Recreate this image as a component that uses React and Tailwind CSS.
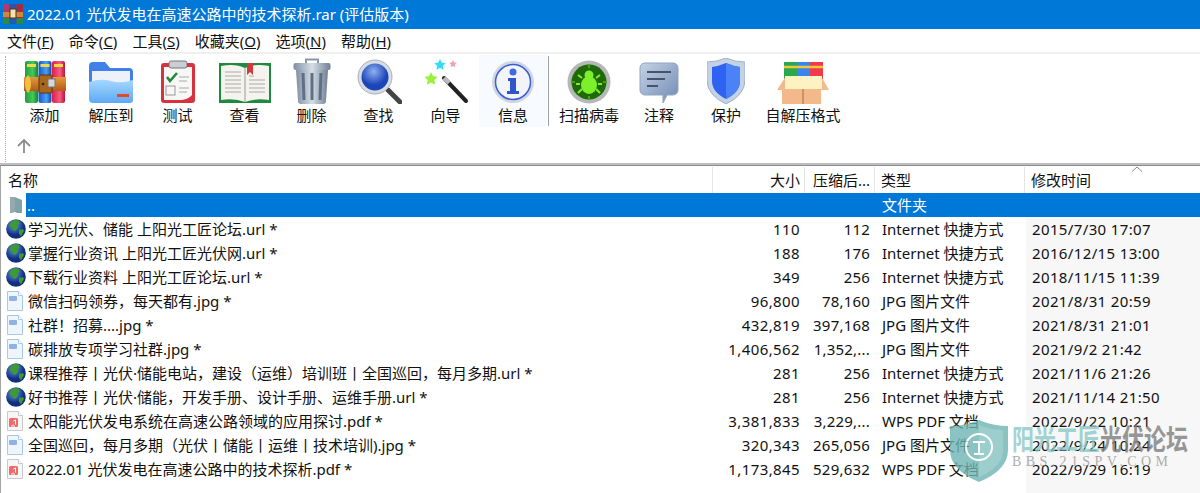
const F = '[font-family:"Noto_Sans","Noto_Sans_CJK_SC",sans-serif]';

const RarIcon = () => (
  <svg width="22" height="22" viewBox="0 0 22 22" className="shrink-0">
    <rect x="1" y="1" width="6.5" height="20" fill="#b03a6e" />
    <rect x="7.5" y="1" width="7" height="20" fill="#3350b0" />
    <rect x="14.5" y="1" width="6.5" height="20" fill="#a82a40" />
    <rect x="1" y="15" width="6.5" height="6" fill="#2f8a3f" />
    <rect x="7.5" y="15" width="7" height="6" fill="#2058b8" />
    <rect x="14.5" y="15" width="6.5" height="6" fill="#2f8a3f" />
    <rect x="1" y="9" width="20" height="5" fill="#c98a3a" />
    <rect x="8" y="6" width="6" height="9" fill="#f3e2b0" stroke="#5a3510" />
  </svg>
);

const Books = () => (
  <svg width="42" height="44" viewBox="0 0 42 44">
    <defs>
      <linearGradient id="g1" x1="0" x2="1"><stop offset="0" stopColor="#1f9e3c" /><stop offset=".6" stopColor="#45c958" /><stop offset="1" stopColor="#178030" /></linearGradient>
      <linearGradient id="g2" x1="0" x2="1"><stop offset="0" stopColor="#1557c8" /><stop offset=".6" stopColor="#4aa0f5" /><stop offset="1" stopColor="#1247a8" /></linearGradient>
      <linearGradient id="g3" x1="0" x2="1"><stop offset="0" stopColor="#d51f4c" /><stop offset=".6" stopColor="#f75c80" /><stop offset="1" stopColor="#b91538" /></linearGradient>
      <linearGradient id="belt" x1="0" x2="0" y1="0" y2="1"><stop offset="0" stopColor="#e39a3c" /><stop offset="1" stopColor="#b35a16" /></linearGradient>
    </defs>
    <rect x="1" y="1" width="13" height="42" rx="2" fill="url(#g1)" />
    <rect x="14.5" y="1" width="13" height="42" rx="2" fill="url(#g2)" />
    <rect x="28" y="1" width="13" height="42" rx="2" fill="url(#g3)" />
    <rect x="3" y="4" width="9" height="3" fill="#f2d94a" />
    <rect x="16.5" y="4" width="9" height="3" fill="#f2d94a" />
    <rect x="30" y="4" width="9" height="3" fill="#f2d94a" />
    <rect x="0" y="17" width="42" height="14" fill="url(#belt)" />
    <path d="M4 15 C0 19 0 29 4 33 C8 29 8 19 4 15Z" fill="#f0c040" />
    <rect x="15" y="15" width="13" height="18" rx="1.5" fill="#a9661f" stroke="#5a3510" />
    <rect x="24" y="19" width="7" height="8" fill="#d8d8d8" stroke="#777" />
    <circle cx="19" cy="24" r="1.3" fill="#3a2208" />
  </svg>
);

const FolderI = () => (
  <svg width="46" height="44" viewBox="0 0 46 44">
    <defs>
      <linearGradient id="fo" x1="0" x2="0" y1="0" y2="1"><stop offset="0" stopColor="#a5d8ff" /><stop offset="1" stopColor="#5ea9f3" /></linearGradient>
    </defs>
    <path d="M1 6a4 4 0 0 1 4-4h12l5 6h19a4 4 0 0 1 4 4v26a4 4 0 0 1-4 4H5a4 4 0 0 1-4-4Z" fill="#3f80ea" />
    <rect x="4" y="11" width="38" height="14" fill="#eef2f8" />
    <path d="M1 22q12-4 22-1t22-1v20a3 3 0 0 1-3 3H5a4 4 0 0 1-4-4Z" fill="url(#fo)" />
    <rect x="29" y="34" width="12" height="3" fill="#e2492b" />
  </svg>
);

const Clip = () => (
  <svg width="36" height="44" viewBox="0 0 36 44">
    <rect x="1" y="3" width="34" height="40" rx="3" fill="#d8323c" />
    <path d="M4 7h28v28q-3 4-10 5H4Z" fill="#f7f7f5" />
    <rect x="9" y="1" width="18" height="7" rx="2" fill="#c9ced3" stroke="#777" />
    <path d="M7 17l3 4 7-8" fill="none" stroke="#1d8a3c" strokeWidth="2.6" />
    <rect x="6" y="26" width="9" height="9" fill="none" stroke="#999" />
    <path d="M19 17h10M19 21h8M19 28h10M19 32h8" stroke="#aaa" strokeWidth="1.2" />
  </svg>
);

const BookI = () => (
  <svg width="52" height="42" viewBox="0 0 52 42">
    <rect x="0" y="1" width="52" height="40" fill="#1f8a3f" />
    <path d="M2 4q14-3 24 2q10-5 24-2v34q-14-2-24 2q-10-4-24-2Z" fill="#f4f3ee" />
    <path d="M26 6v34" stroke="#999" />
    <path d="M6 10h16M6 14h16M6 18h16M6 22h16M6 26h16M6 30h16M30 18h16M30 22h16M30 26h16M30 30h16M30 14h5" stroke="#c4c4c0" strokeWidth="1.5" />
    <path d="M28 1h6v12l-3-3-3 3Z" fill="#cf3a3a" />
  </svg>
);

const Trash = () => (
  <svg width="38" height="46" viewBox="0 0 38 46">
    <defs>
      <linearGradient id="tr" x1="0" x2="1"><stop offset="0" stopColor="#7f8fa4" /><stop offset=".5" stopColor="#d6dee6" /><stop offset="1" stopColor="#6f7f94" /></linearGradient>
    </defs>
    <path d="M13 5V1.5h12V5" fill="none" stroke="#8b97a5" strokeWidth="2" />
    <rect x="0.5" y="5" width="37" height="7" rx="2" fill="url(#tr)" />
    <path d="M3 12h32l-2 31a3 3 0 0 1-3 3H8a3 3 0 0 1-3-3Z" fill="url(#tr)" />
    <path d="M10 15l1 27M19 15v27M28 15l-1 27" stroke="#5f6f84" strokeWidth="3" />
  </svg>
);

const Search = () => (
  <svg width="46" height="46" viewBox="0 0 46 46">
    <defs>
      <radialGradient id="se" cx=".45" cy=".3"><stop offset="0" stopColor="#8fb0f0" /><stop offset="1" stopColor="#1c45b8" /></radialGradient>
    </defs>
    <path d="M32 32l12 12" stroke="#444" strokeWidth="5" strokeLinecap="round" />
    <circle cx="19" cy="19" r="17" fill="#d6dce4" stroke="#a8b0bb" />
    <circle cx="19" cy="19" r="13.5" fill="url(#se)" />
  </svg>
);

const Star = ({ x, y, r, c }) => {
  const p = [];
  for (let i = 0; i < 10; i++) {
    const a = -Math.PI / 2 + (i * Math.PI) / 5;
    const q = i % 2 ? r * 0.5 : r;
    p.push(`${x + q * Math.cos(a)},${y + q * Math.sin(a)}`);
  }
  return <polygon points={p.join(" ")} fill={c} />;
};

const Wand = () => (
  <svg width="46" height="46" viewBox="0 0 46 46">
    <Star x={17} y={7} r={6} c="#35dcf5" />
    <Star x={30} y={6} r={4} c="#f4a0a8" />
    <Star x={8} y={21} r={7} c="#9bf03a" />
    <path d="M21 20l22 23" stroke="#222" strokeWidth="4" strokeLinecap="round" />
    <path d="M21 20l5 5" stroke="#bbb" strokeWidth="4" />
  </svg>
);

const Info = () => (
  <svg width="44" height="44" viewBox="0 0 44 44">
    <circle cx="22" cy="22" r="21" fill="#cfd6e2" />
    <circle cx="22" cy="22" r="17.5" fill="#f2f4f8" stroke="#3a5fd4" strokeWidth="1.5" />
    <circle cx="22" cy="12" r="3.5" fill="#3f6be0" />
    <path d="M17 18h8v13h3v3H16v-3h3V21h-2Z" fill="#2f55cc" />
  </svg>
);

const Bug = () => (
  <svg width="44" height="44" viewBox="0 0 44 44">
    <circle cx="22" cy="22" r="21.5" fill="#b4b8b6" />
    <circle cx="22" cy="22" r="17.5" fill="#1f6a08" />
    <g stroke="#7df02c" strokeWidth="2" fill="none">
      <path d="M22 4v4M22 36v4M4 22h4M36 22h4" stroke="#4aa21a" />
      <path d="M15 18l-4-3M29 18l4-3M13 24h-4M31 24h4M15 29l-4 4M29 29l4 4" />
    </g>
    <ellipse cx="22" cy="25" rx="8" ry="9" fill="#7df02c" />
    <circle cx="22" cy="15" r="4.5" fill="#7df02c" />
  </svg>
);

const Note = () => (
  <svg width="40" height="42" viewBox="0 0 40 42">
    <defs>
      <linearGradient id="no" x1="0" x2="1" y1="0" y2="1"><stop offset="0" stopColor="#c5d2e4" /><stop offset="1" stopColor="#6f8ab4" /></linearGradient>
    </defs>
    <path d="M6 1h28a5 5 0 0 1 5 5v22a5 5 0 0 1-5 5h-6l-4 8v-8H6a5 5 0 0 1-5-5V6a5 5 0 0 1 5-5Z" fill="url(#no)" stroke="#8fa3c0" />
    <path d="M8 10h24M8 17h18M8 24h11" stroke="#46536a" strokeWidth="2" />
  </svg>
);

const Shield = () => (
  <svg width="38" height="46" viewBox="0 0 38 46">
    <path d="M19 0q9 4 19 4v18q0 15-19 24Q0 37 0 22V4q10 0 19-4Z" fill="#c4d2e6" stroke="#9fb0c8" />
    <path d="M19 5q7 3 14 4v14q0 11-14 18Q5 34 5 23V9q7-1 14-4Z" fill="#2f62f0" />
    <path d="M19 5q7 3 14 4v14q0 11-14 18Z" fill="#4c82f7" />
  </svg>
);

const BoxI = () => (
  <svg width="52" height="42" viewBox="0 0 52 42">
    <rect x="7" y="0" width="13" height="20" fill="#2aa850" />
    <rect x="20" y="0" width="13" height="20" fill="#3a86ee" />
    <rect x="33" y="0" width="13" height="20" fill="#ee3a4c" />
    <path d="M7 5h39" stroke="#f0c63a" strokeWidth="2.5" />
    <path d="M9 14h35l8 14H44v14H5V28H0Z" fill="#f4b98a" />
    <rect x="8" y="14" width="37" height="13" fill="#fdf2c2" />
    <path d="M26 27v15" stroke="#a86a3a" />
  </svg>
);

const tools = [
  ["添加", Books, "w-[67px]"],
  ["解压到", FolderI, "w-[66px]"],
  ["测试", Clip, "w-[67px]"],
  ["查看", BookI, "w-[67px]"],
  ["删除", Trash, "w-[67px]"],
  ["查找", Search, "w-[67px]"],
  ["向导", Wand, "w-[67px]"],
  ["信息", Info, "w-[68px] bg-[#f7fafe]"],
];
const tools2 = [
  ["扫描病毒", Bug, "w-[76px]"],
  ["注释", Note, "w-[64px]"],
  ["保护", Shield, "w-[70px]"],
  ["自解压格式", BoxI, "w-[84px]"],
];

const Tool = ({ label, Icon, cls }) => (
  <div className={`${cls} h-[72px] flex flex-col items-center shrink-0`}>
    <div className="h-[49px] flex items-end justify-center"><Icon /></div>
    <div className="text-[15px] leading-[20px] mt-[1px] text-[#111] whitespace-nowrap">{label}</div>
  </div>
);

const Globe = () => (
  <svg width="20" height="20" viewBox="0 0 20 20" className="shrink-0">
    <defs>
      <radialGradient id="gl" cx=".4" cy=".3"><stop offset="0" stopColor="#5f9be8" /><stop offset="1" stopColor="#12307f" /></radialGradient>
    </defs>
    <circle cx="10" cy="10" r="9.8" fill="url(#gl)" />
    <path d="M5 3q4-3 8-1l1 3-3 1 1 3-3 3-2-1-1-3-3-1Z" fill="#3c9a2e" />
    <path d="M13 11l4-1 1 2-3 5-2-2Z" fill="#3c9a2e" />
  </svg>
);

const FileI = ({ kind }) => (
  <svg width="18" height="20" viewBox="0 0 18 20" className="shrink-0">
    <path d="M1.5 .5h11l4 4v15h-15Z" fill={kind === "pdf" ? "#f6f6f6" : "#eef5fd"} stroke={kind === "pdf" ? "#c9c9c9" : "#a9c8ee"} />
    <path d="M12.5 .5v4h4" fill="#fff" stroke={kind === "pdf" ? "#c9c9c9" : "#a9c8ee"} />
    {kind === "pdf" ? (
      <>
        <rect x="3" y="7" width="9" height="9" rx="1.5" fill="#ee6a6a" />
        <path d="M9.5 9v4.5M9.5 9l-2 1M7 14a1.2 1.2 0 1 0 .1 0" fill="none" stroke="#fff" strokeWidth="1" />
      </>
    ) : (
      <rect x="3" y="5" width="8" height="5" rx="1" fill="#8fb4e4" />
    )}
  </svg>
);

const UpDir = () => (
  <svg width="14" height="18" viewBox="0 0 14 18" className="shrink-0">
    <path d="M1 1h5l7 3v13H8l-2-1-5 1Z" fill="#7fa3a6" />
    <path d="M1 1h5v15l-5 1Z" fill="#93a9ad" />
  </svg>
);

const rows = [
  ["g", "学习光伏、储能 上阳光工匠论坛.url *", "110", "112", "Internet 快捷方式", "2015/7/30 17:07"],
  ["g", "掌握行业资讯 上阳光工匠光伏网.url *", "188", "176", "Internet 快捷方式", "2016/12/15 13:00"],
  ["g", "下载行业资料 上阳光工匠论坛.url *", "349", "256", "Internet 快捷方式", "2018/11/15 11:39"],
  ["j", "微信扫码领券，每天都有.jpg *", "96,800", "78,160", "JPG 图片文件", "2021/8/31 20:59"],
  ["j", "社群！招募....jpg *", "432,819", "397,168", "JPG 图片文件", "2021/8/31 21:01"],
  ["j", "碳排放专项学习社群.jpg *", "1,406,562", "1,352,...", "JPG 图片文件", "2021/9/2 21:42"],
  ["g", "课程推荐丨光伏·储能电站，建设（运维）培训班丨全国巡回，每月多期.url *", "281", "256", "Internet 快捷方式", "2021/11/6 21:26"],
  ["g", "好书推荐丨光伏·储能，开发手册、设计手册、运维手册.url *", "281", "256", "Internet 快捷方式", "2021/11/14 21:50"],
  ["p", "太阳能光伏发电系统在高速公路领域的应用探讨.pdf *", "3,381,833", "3,229,...", "WPS PDF 文档", "2022/9/22 10:21"],
  ["j", "全国巡回，每月多期（光伏丨储能丨运维丨技术培训).jpg *", "320,343", "265,056", "JPG 图片文件", "2022/9/24 10:24"],
  ["p", "2022.01 光伏发电在高速公路中的技术探析.pdf *", "1,173,845", "529,632", "WPS PDF 文档", "2022/9/29 16:19"],
];

const Row = ({ r }) => (
  <div className="h-6 flex items-center text-[15px] text-[#111]">
    <div className="w-[712px] flex items-center pl-[5px] shrink-0 overflow-hidden">
      <div className="w-[22px] shrink-0 flex">
        {r[0] === "g" ? <Globe /> : <FileI kind={r[0] === "p" ? "pdf" : "jpg"} />}
      </div>
      <span className="whitespace-nowrap">{r[1]}</span>
    </div>
    <div className="w-[87px] text-right shrink-0 tracking-[0.4px]">{r[2]}</div>
    <div className="w-[70px] text-right shrink-0 tracking-[0.2px]">{r[3]}</div>
    <div className="w-[156px] pl-[12px] shrink-0 whitespace-nowrap">{r[4]}</div>
    <div className="flex-1 h-full bg-[#f7f7f7] pl-[6px] flex items-center whitespace-nowrap tracking-[0.37px]">{r[5]}</div>
  </div>
);

export default function App() {
  return (
    <div className={`${F} relative w-[1200px] h-[493px] overflow-hidden bg-white`}>
      <div className="h-[29px] bg-[#0078d7] flex items-center pl-[2px] pb-[1px] gap-[3px] text-white text-[15px]">
        <RarIcon />
        <span className="whitespace-nowrap">2022.01 光伏发电在高速公路中的技术探析.rar (评估版本)</span>
      </div>
      <div className="h-[23px] pt-[1px] box-border flex items-center pl-[7px] gap-[15px] text-[15px] text-[#111] bg-white">
        {[["文件", "F"], ["命令", "C"], ["工具", "S"], ["收藏夹", "O"], ["选项", "N"], ["帮助", "H"]].map(([a, b]) => (
          <span key={b} className="whitespace-nowrap">{a}(<span className="underline">{b}</span>)</span>
        ))}
      </div>
      <div className="h-[2px] bg-[#f0f0f0]" />
      <div className="h-[109px] flex items-start border-b-2 border-[#bdbdbd] box-content">
        <div className="w-[1px] ml-[5px] mt-[2px] border-l border-dotted border-[#aaa] h-[106px] shrink-0" />
        <div className="flex flex-col ml-[5px] pt-[1px]">
          <div className="flex items-start">
            {tools.map(([l, I, c]) => <Tool key={l} label={l} Icon={I} cls={c} />)}
            <div className="w-[1px] h-[70px] bg-[#a0a0a0] ml-[1px] mr-[2px] mt-[1px] shrink-0" />
            {tools2.map(([l, I, c]) => <Tool key={l} label={l} Icon={I} cls={c} />)}
          </div>
          <div className="pl-[5px] pt-[11px]">
            <svg width="16" height="16" viewBox="0 0 16 16"><path d="M8 15V2M2 8l6-6 6 6" fill="none" stroke="#8c8c8c" strokeWidth="1.8" /></svg>
          </div>
        </div>
      </div>
      <div className="border-t border-[#8a8f96] border-l border-l-[#a5a5a5] h-[328px]">
        <div className="h-[27px] pt-[1px] flex items-center text-[15px] text-[#111] relative">
          <div className="w-[712px] pl-[7px] h-full flex items-center border-r border-[#e5e5e5] shrink-0">名称</div>
          <div className="w-[92px] pr-[4px] text-right h-full flex items-center justify-end border-r border-[#e5e5e5] shrink-0">大小</div>
          <div className="w-[70px] pl-[8px] h-full flex items-center border-r border-[#e5e5e5] shrink-0 whitespace-nowrap overflow-hidden">压缩后...</div>
          <div className="w-[150px] pl-[6px] h-full flex items-center border-r border-[#e5e5e5] shrink-0">类型</div>
          <div className="pl-[6px] h-full flex items-center">修改时间</div>
          <svg width="12" height="6" viewBox="0 0 12 6" className="absolute left-[1130px] top-0"><path d="M1 5.5L6 1l5 4.5" fill="none" stroke="#888" /></svg>
        </div>
        <div className="h-6 flex items-center text-[15px] text-white">
          <div className="w-[25px] pl-[8px] shrink-0 bg-white h-full flex items-center"><UpDir /></div>
          <div className="flex-1 h-full bg-[#0078d7] flex items-center pl-[1px]">
            <span className="w-[855px] shrink-0">..</span>
            <span>文件夹</span>
          </div>
        </div>
        {rows.map((r) => <Row key={r[1]} r={r} />)}
        <div className="h-[13px] flex"><div className="flex-1" /><div className="w-[174px] bg-[#f7f7f7]" /></div>
      </div>
      <div className="absolute left-[950px] top-[420px] flex items-start opacity-80 pointer-events-none">
        <svg width="58" height="62" viewBox="0 0 58 62" className="shrink-0">
          <path d="M29 0q14 6 29 6v24q0 20-29 32Q0 50 0 30V6q15 0 29-6Z" fill="#6fb5b3" />
          <path d="M29 5q11 5 24 5v20q0 17-24 27Z" fill="#83c2c0" />
          <circle cx="29" cy="27" r="13" fill="none" stroke="#fff" strokeWidth="2" />
          <path d="M23 22h12M29 22v12M24 34h10" stroke="#fff" strokeWidth="2" />
        </svg>
        <div className="ml-[4px] w-[180px] shrink-0">
          <div className="flex text-[22px] leading-[26px] mt-[1px] font-bold whitespace-nowrap origin-top [transform:scaleY(1.3)]">
            <span className="text-[#8ccac8]">阳光工匠</span>
            <span className="text-[#7f7f7f]">光伏论坛</span>
          </div>
          <div className="[font-family:'Liberation_Serif',serif] text-[14px] tracking-[4.4px] text-[#9a9a9a] mt-[8px] leading-[14px] whitespace-nowrap">BBS.21SPV.COM</div>
        </div>
      </div>
    </div>
  );
}
